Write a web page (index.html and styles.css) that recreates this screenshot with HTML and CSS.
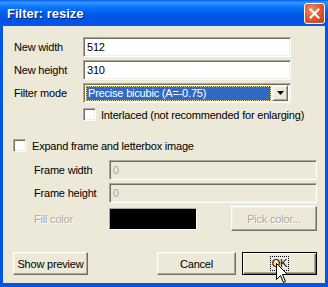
FILE: index.html
```html
<!DOCTYPE html>
<html lang="en">
<head>
	<meta charset="utf-8" />
	<title>Filter: resize</title>
	<link rel="stylesheet" href="styles.css">
</head>
<body>

	<div class="window">

		<div class="titlebar">
			<span class="title">Filter: resize</span>
			<div class="close">
				<svg width="11" height="11" viewBox="0 0 11 11">
					<path d="M1.5 1.5 L9.5 9.5 M9.5 1.5 L1.5 9.5" stroke="#fff" stroke-width="2" stroke-linecap="square" />
				</svg>
			</div>
		</div>

		<div class="client">

			<div class="rows main-rows">
				<span class="label">New width</span>
				<div class="edit">512</div>
				<span class="label">New height</span>
				<div class="edit">310</div>
				<span class="label">Filter mode</span>
				<div class="select">
					<div class="value">Precise bicubic (A=-0.75)</div>
					<div class="drop">
						<svg width="7" height="4" viewBox="0 0 7 4"><path d="M0 0 H7 L3.5 4 Z" fill="#000" /></svg>
					</div>
				</div>
			</div>

			<div class="check interlaced">
				<span class="box"></span>
				<span>Interlaced (not recommended for enlarging)</span>
			</div>

			<div class="check expand">
				<span class="box"></span>
				<span>Expand frame and letterbox image</span>
			</div>

			<div class="rows frame-rows">
				<span class="label">Frame width</span>
				<div class="edit disabled">0</div>
				<span class="label">Frame height</span>
				<div class="edit disabled">0</div>
				<span class="label etched">Fill color</span>
				<div class="fill">
					<div class="swatch"></div>
					<div class="button pick etched">Pick color...</div>
				</div>
			</div>

			<div class="buttons">
				<div class="button preview">Show preview</div>
				<div class="button cancel">Cancel</div>
				<div class="button ok default"><span class="focus">OK</span></div>
			</div>

		</div>

		<svg class="cursor" width="13" height="21" viewBox="0 0 13 21">
			<path d="M0.5 0.5 V16.5 L4.5 12.5 L7.5 19.5 L9.5 18.5 L6.5 11.5 H11.5 Z" fill="#fff" stroke="#000" stroke-width="1" stroke-linejoin="miter" />
		</svg>

	</div>

</body>
</html>
```

FILE: styles.css
```css
* {
	box-sizing: border-box;
}

body {
	margin: 0;
	padding: 0;
	background: #ECE9D8;
	font-family: 'Liberation Sans', Arial, sans-serif;
	font-size: 11px;
	letter-spacing: -0.2px;
	color: #000;
}

/*Window frame*/
.window {
	position: relative;
	width: 328px;
	height: 287px;
	display: flex;
	flex-direction: column;
	padding: 0 3px 4px 3px;
	background: #0055E5;
	overflow: hidden;
}

.titlebar {
	height: 26px;
	margin: 0 -3px;
	padding: 0 3px 0 7px;
	display: flex;
	align-items: center;
	justify-content: space-between;
	background: linear-gradient(#0058EE 0%, #3A93FF 8%, #288EFF 14%, #127DFF 22%, #036FFC 34%, #0262EE 48%, #0057E5 62%, #0054E1 80%, #0055EB 92%, #005BF5 100%);
}
.title {
	font-size: 13px;
	font-weight: bold;
	letter-spacing: 0;
	color: #fff;
	text-shadow: 1px 1px #0A1883;
	padding-top: 1px;
}
.close {
	width: 21px;
	height: 21px;
	border: 1px solid #fff;
	border-radius: 3px;
	background: radial-gradient(circle at 35% 30%, #F0906A 0%, #E35A2E 45%, #C7401A 100%);
	display: flex;
	align-items: center;
	justify-content: center;
}

/*Client area*/
.client {
	flex: 1;
	background: #ECE9D8;
	padding: 11px 8px 0 10px;
	display: flex;
	flex-direction: column;
}

.rows {
	display: grid;
	align-items: center;
}
.main-rows {
	grid-template-columns: 70px 208px;
	grid-template-rows: 20px 20px 20px;
	row-gap: 3px;
}
.frame-rows {
	grid-template-columns: 75px 1fr;
	grid-template-rows: 20px 20px 25px;
	row-gap: 3px;
	margin: 8px 0 0 21px;
}
.label {
	padding-left: 1px;
	white-space: nowrap;
}
.frame-rows .label {
	padding-left: 0;
}

/*Sunken edit*/
.edit {
	height: 20px;
	padding: 2px 3px 0 3px;
	line-height: 14px;
	background: #fff;
	border: 1px solid;
	border-color: #ACA899 #fff #fff #ACA899;
	box-shadow: inset 1px 1px #716F64, inset -1px -1px #F1EFE2;
}
.edit.disabled {
	background: #ECE9D8;
	color: #ACA899;
}

.select {
	height: 20px;
	display: flex;
	align-items: center;
	padding: 1px 2px;
	gap: 1px;
	background: #fff;
	border: 1px solid;
	border-color: #ACA899 #fff #fff #ACA899;
	box-shadow: inset 1px 1px #716F64, inset -1px -1px #F1EFE2;
}
.select .value {
	flex: 1;
	height: 15px;
	line-height: 13px;
	padding-left: 1px;
	background: #316AC5;
	color: #fff;
	border: 1px dotted #E8D890;
}
.select .drop {
	width: 16px;
	height: 16px;
	display: flex;
	align-items: center;
	justify-content: center;
	background: #ECE9D8;
	border: 1px solid;
	border-color: #F1EFE2 #716F64 #716F64 #F1EFE2;
	box-shadow: inset 1px 1px #fff, inset -1px -1px #ACA899;
}

/*Check boxes*/
.check {
	display: flex;
	align-items: center;
	height: 13px;
	white-space: nowrap;
}
.check .box {
	width: 13px;
	height: 13px;
	flex: none;
	background: #fff;
	border: 1px solid;
	border-color: #ACA899 #fff #fff #ACA899;
	box-shadow: inset 1px 1px #716F64, inset -1px -1px #F1EFE2;
}
.interlaced {
	margin: 5px 0 0 70px;
	gap: 5px;
}
.expand {
	margin-top: 18px;
	gap: 6px;
}

/*Fill colour*/
.fill {
	display: flex;
	align-items: center;
	justify-content: space-between;
	height: 25px;
}
.swatch {
	width: 88px;
	height: 22px;
	background: #000;
	border: 1px solid;
	border-color: #ACA899 #fff #fff #ACA899;
}

/*Raised buttons*/
.button {
	height: 23px;
	display: flex;
	align-items: center;
	justify-content: center;
	background: #ECE9D8;
	border: 1px solid;
	border-color: #fff #716F64 #716F64 #fff;
	box-shadow: inset -1px -1px #ACA899, inset 1px 1px #F1EFE2;
	white-space: nowrap;
}
.button.pick {
	width: 86px;
	height: 25px;
}
.etched {
	color: #ACA899;
	text-shadow: 1px 1px #fff;
}

.buttons {
	display: flex;
	gap: 6px;
	margin-top: 21px;
}
.preview {
	width: 75px;
}
.cancel {
	width: 79px;
	margin-left: auto;
}
.ok {
	width: 75px;
}
.button.default {
	border: 1px solid #000;
	box-shadow: inset 1px 1px #fff, inset -1px -1px #716F64, inset -2px -2px #ACA899;
}
.focus {
	padding: 0 1px;
	line-height: 13px;
	border: 1px dotted #000;
}

/*Mouse pointer over OK*/
.cursor {
	position: absolute;
	left: 276px;
	top: 263px;
}
```
